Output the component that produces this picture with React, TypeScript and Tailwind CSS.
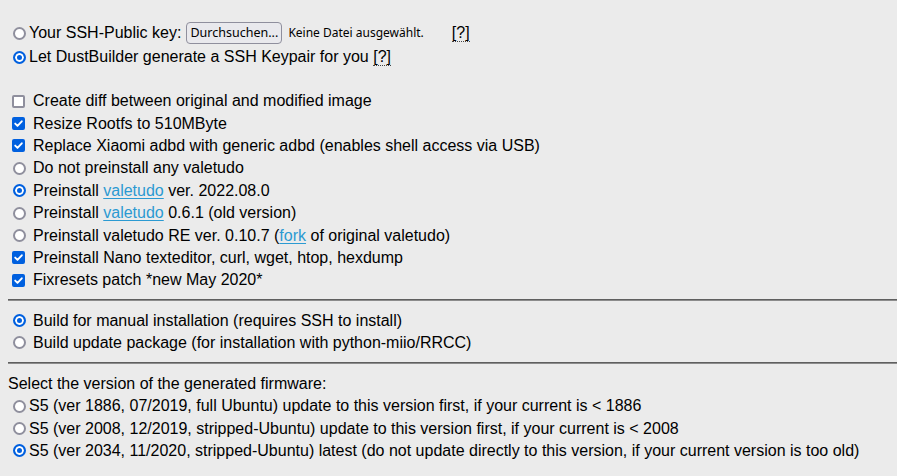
import React from "react";

function Radio({ checked = false, name }: { checked?: boolean; name: string }) {
  return (
    <input
      type="radio"
      name={name}
      defaultChecked={checked}
      className="appearance-none shrink-0 w-[13px] h-[13px] rounded-full border-2 border-[#8f8f9d] bg-white checked:border-[#0060df] checked:bg-[#0060df] checked:shadow-[inset_0_0_0_2px_white]"
    />
  );
}

function Check({ checked = false }: { checked?: boolean }) {
  return (
    <span className="relative inline-flex shrink-0 w-[13px] h-[13px]">
      <input
        type="checkbox"
        defaultChecked={checked}
        className="peer appearance-none w-[13px] h-[13px] rounded-[2px] border-2 border-[#8f8f9d] bg-white checked:border-[#0060df] checked:bg-[#0060df]"
      />
      {checked && (
        <svg
          className="pointer-events-none absolute left-0 top-0"
          width="13"
          height="13"
          viewBox="0 0 13 13"
        >
          <path d="M3.2 6.6 L5.5 8.9 L9.8 4.3" fill="none" stroke="white" strokeWidth="1.9" strokeLinecap="round" strokeLinejoin="round" />
        </svg>
      )}
    </span>
  );
}

function Link({ children }: { children: React.ReactNode }) {
  return <a className="text-[#2b9ad2] underline underline-offset-[2px]">{children}</a>;
}

function Q({ className = "" }: { className?: string }) {
  return (
    <abbr className={"no-underline border-b border-dotted border-[#444] leading-[17px] " + className}>[?]</abbr>
  );
}

function CRow({ children }: { children: React.ReactNode }) {
  return <div className="flex items-center h-[22.4px] whitespace-nowrap">{children}</div>;
}

export default function App() {
  return (
    <div className="min-h-[476px] w-full bg-[#ebebeb] text-black text-[16px] font-['Liberation_Sans',Arial,sans-serif] pl-[8px] pt-[21px] overflow-hidden">
      {/* SSH key group */}
      <div className="flex items-center h-[24px] whitespace-nowrap">
        <span className="ml-[5px] mr-[3px] flex"><Radio name="ssh" /></span>
        <span>Your SSH-Public key:</span>
        <button className="ml-[5px] h-[22px] w-[96px] border border-[#8f8f9d] rounded-[4px] bg-[#e9e9ed] text-[12.5px] font-['Noto_Sans',sans-serif] leading-none">
          Durchsuchen...
        </button>
        <span className="ml-[6px] text-[12px] font-['Noto_Sans',sans-serif]">Keine Datei ausgewählt.</span>
        <Q className="ml-[28px]" />
      </div>
      <div className="flex items-center h-[24px] whitespace-nowrap">
        <span className="ml-[5px] mr-[3px] flex"><Radio name="ssh" checked /></span>
        <span>Let DustBuilder generate a SSH Keypair for you&nbsp;</span>
        <Q />
      </div>

      {/* Options */}
      <div className="mt-[21px]">
        <CRow><span className="ml-[4px] mr-[8px] flex"><Check /></span>Create diff between original and modified image</CRow>
        <CRow><span className="ml-[4px] mr-[8px] flex"><Check checked /></span>Resize Rootfs to 510MByte</CRow>
        <CRow><span className="ml-[4px] mr-[8px] flex"><Check checked /></span>Replace Xiaomi adbd with generic adbd (enables shell access via USB)</CRow>
        <CRow><span className="ml-[5px] mr-[7px] flex"><Radio name="val" /></span>Do not preinstall any valetudo</CRow>
        <CRow><span className="ml-[5px] mr-[7px] flex"><Radio name="val" checked /></span>Preinstall&nbsp;<Link>valetudo</Link>&nbsp;ver. 2022.08.0</CRow>
        <CRow><span className="ml-[5px] mr-[7px] flex"><Radio name="val" /></span>Preinstall&nbsp;<Link>valetudo</Link>&nbsp;0.6.1 (old version)</CRow>
        <CRow><span className="ml-[5px] mr-[7px] flex"><Radio name="val" /></span>Preinstall valetudo RE ver. 0.10.7 (<Link>fork</Link>&nbsp;of original valetudo)</CRow>
        <CRow><span className="ml-[4px] mr-[8px] flex"><Check checked /></span>Preinstall Nano texteditor, curl, wget, htop, hexdump</CRow>
        <CRow><span className="ml-[4px] mr-[8px] flex"><Check checked /></span>Fixresets patch *new May 2020*</CRow>
      </div>

      <div className="mt-[7px] border-t border-t-[#5f5f5f] border-b border-b-[#8c8c8c]" />

      <div className="mt-[9.4px]">
        <div className="flex items-center h-[22px] whitespace-nowrap"><span className="ml-[5px] mr-[7px] flex"><Radio name="build" checked /></span>Build for manual installation (requires SSH to install)</div>
        <div className="flex items-center h-[22px] whitespace-nowrap"><span className="ml-[5px] mr-[7px] flex"><Radio name="build" /></span>Build update package (for installation with python-miio/RRCC)</div>
      </div>

      <div className="mt-[8px] border-t border-t-[#5f5f5f] border-b border-b-[#8c8c8c]" />

      <div className="mt-[9px]">
        <div className="flex items-center h-[22px] whitespace-nowrap">Select the version of the generated firmware:</div>
        <CRow><span className="ml-[5px] mr-[3px] flex"><Radio name="fw" /></span>S5 (ver 1886, 07/2019, full Ubuntu) update to this version first, if your current is &lt; 1886</CRow>
        <CRow><span className="ml-[5px] mr-[3px] flex"><Radio name="fw" /></span>S5 (ver 2008, 12/2019, stripped-Ubuntu) update to this version first, if your current is &lt; 2008</CRow>
        <CRow><span className="ml-[5px] mr-[3px] flex"><Radio name="fw" checked /></span>S5 (ver 2034, 11/2020, stripped-Ubuntu) latest (do not update directly to this version, if your current version is too old)</CRow>
      </div>
    </div>
  );
}
